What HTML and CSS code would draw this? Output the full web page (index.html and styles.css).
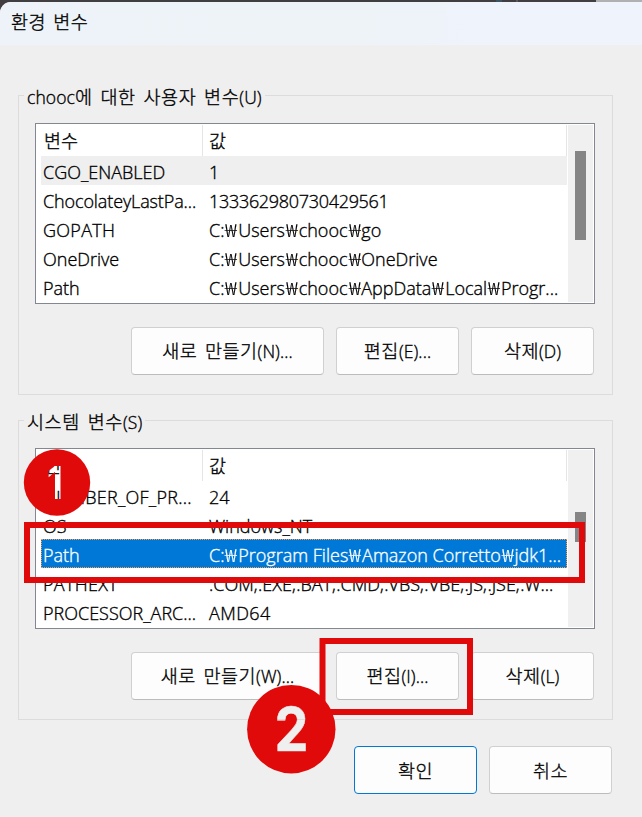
FILE: index.html
```
<!DOCTYPE html>
<html lang="ko">
<head>
<meta charset="utf-8">
<title>환경 변수</title>
<link rel="stylesheet" href="styles.css">
</head>
<body>
<div class="backdrop"><i class="seg teal"></i><i class="seg line"></i><i class="seg light"></i></div>
<main class="dialog">
  <header class="titlebar">환경 변수</header>
  <section class="group">
    <h2 class="legend"><span class="en">chooc</span>에 대한 사용자 변수<span class="en">(U)</span></h2>
    <div class="list">
      <div class="table">
        <div class="head"><span class="name">변수</span><span class="value">값</span></div>
        <div class="row muted"><span class="name">CGO_ENABLED</span><span class="value">1</span></div>
        <div class="row"><span class="name n-choco">ChocolateyLastPa...</span><span class="value v-num">133362980730429561</span></div>
        <div class="row"><span class="name n-gopath">GOPATH</span><span class="value">C:<b>₩</b>Users<b>₩</b>chooc<b>₩</b>go</span></div>
        <div class="row"><span class="name">OneDrive</span><span class="value">C:<b>₩</b>Users<b>₩</b>chooc<b>₩</b>OneDrive</span></div>
        <div class="row"><span class="name">Path</span><span class="value">C:<b>₩</b>Users<b>₩</b>chooc<b>₩</b>AppData<b>₩</b>Local<b>₩</b>Progr...</span></div>
      </div>
      <div class="scroll"><div class="thumb user-thumb"></div></div>
    </div>
    <div class="actions">
      <button class="wide">새로 만들기<span class="en">(N)...</span></button>
      <button>편집<span class="en">(E)...</span></button>
      <button>삭제<span class="en">(D)</span></button>
    </div>
  </section>
  <section class="group">
    <h2 class="legend">시스템 변수<span class="en">(S)</span></h2>
    <div class="list">
      <div class="table">
        <div class="head"><span class="name">변수</span><span class="value">값</span></div>
        <div class="row"><span class="name n-number">NUMBER_OF_PR...</span><span class="value">24</span></div>
        <div class="row"><span class="name">OS</span><span class="value">Windows_NT</span></div>
        <div class="row selected"><span class="name">Path</span><span class="value">C:<b>₩</b>Program Files<b>₩</b>Amazon Corretto<b>₩</b>jdk1...</span></div>
        <div class="row"><span class="name n-gopath">PATHEXT</span><span class="value">.COM;.EXE;.BAT;.CMD;.VBS;.VBE;.JS;.JSE;.W...</span></div>
        <div class="row"><span class="name">PROCESSOR_ARC...</span><span class="value v-nt">AMD64</span></div>
      </div>
      <div class="scroll"><div class="thumb system-thumb"></div></div>
    </div>
    <div class="actions">
      <button class="wide">새로 만들기<span class="en">(W)...</span></button>
      <button>편집<span class="en">(I)...</span></button>
      <button>삭제<span class="en">(L)</span></button>
    </div>
  </section>
  <footer class="confirm">
    <button class="primary">확인</button>
    <button>취소</button>
  </footer>
</main>
<svg class="marks" width="642" height="817" viewBox="0 0 642 817">
  <defs>
    <mask id="cut" maskUnits="userSpaceOnUse" x="0" y="0" width="642" height="817">
      <rect width="642" height="817" fill="#fff"/>
      <text class="digit one" transform="translate(47 499) scale(.82 1)">1</text>
      <text class="digit two" transform="translate(274.500 751) scale(.9 1)">2</text>
    </mask>
  </defs>
  <g fill="none" stroke="#e10a0a" stroke-width="6">
    <rect x="27" y="525" width="555" height="55"/>
    <rect x="322.5" y="641" width="147.500" height="71"/>
  </g>
  <g fill="#e10a0a" mask="url(#cut)">
    <circle cx="57" cy="482.500" r="33.200"/>
    <circle cx="291.300" cy="729.200" r="44.200"/>
  </g>
</svg>
</body>
</html>
```
FILE: styles.css
```
* { box-sizing: border-box; }
body {
  margin: 0;
  width: 642px;
  height: 817px;
  overflow: hidden;
  position: relative;
  background: #403e40;
  color: #000;
  font: 300 18px/29px "Open Sans", "Noto Sans CJK KR", sans-serif;
  -webkit-text-stroke: .35px currentColor;
}
.backdrop { height: 2px; display: flex; background: #403e40; }
.seg { height: 2px; flex: none; }
.teal { width: 6px; margin-left: 496px; background: #3a5560; }
.line { width: 2px; margin-left: 14px; background: #5b595b; }
.light { width: 46px; margin-left: 78px; background: #b1b0b2; }
.dialog {
  height: 815px;
  background: #efefef;
  border-top-left-radius: 11px;
  overflow: hidden;
}
.titlebar {
  height: 43px;
  padding: 5px 11px;
  background: linear-gradient(100deg, #edf3f8 0%, #edf3f7 55%, #eff3fc 75%);
  font-family: "Noto Sans CJK KR", sans-serif;
  font-size: 18.5px;
  font-weight: 300;
  letter-spacing: .5px;
  word-spacing: 1.5px;
}
.group {
  width: 595px;
  height: 300px;
  margin: 50px 0 0 18px;
  padding: 0 17px;
  border: 1px solid #dcdcdc;
}
.group + .group { margin-top: 25px; }
.legend {
  width: fit-content;
  height: 28px;
  margin: -14px 0 13px -12px;
  padding: 0 3px;
  background: #efefef;
  font: 300 18.5px/28px "Noto Sans CJK KR", sans-serif;
  letter-spacing: .6px;
  word-spacing: 2px;
  white-space: nowrap;
}
.en { font-family: "Open Sans", sans-serif; font-size: 17.5px; letter-spacing: .1px; }
.list {
  width: 560px;
  height: 181px;
  margin-left: -1px;
  padding: 1px 1px 1px 5px;
  display: flex;
  justify-content: space-between;
  border: 1px solid #828790;
  background: #fff;
}
.table { width: 526px; }
.head, .row { display: grid; grid-template-columns: 162px 364px; }
.head {
  height: 31px;
  line-height: 31px;
  font-family: "Noto Sans CJK KR", sans-serif;
  font-size: 18.5px;
}
.head span { border-right: 1px solid #e5e5e5; }
.head .name { padding-left: 3px; }
.row { height: 29px; line-height: 32px; }
.name { padding-left: 2px; white-space: nowrap; }
.value { padding-left: 6px; white-space: nowrap; }
b {
  display: inline-block;
  width: 13.8px;
  font: 300 18px/16px "Noto Sans CJK KR", sans-serif;
  text-align: center;
  transform: scaleX(1.22);
  -webkit-text-stroke: .1px currentColor;
}
.n-choco { letter-spacing: -.12px; }
.v-num { letter-spacing: -.3px; }
.n-gopath { letter-spacing: .3px; }
.n-number { letter-spacing: .25px; }
.v-nt { letter-spacing: .4px; }
.muted { background: #efefef; }
.selected { background: #0078d7; color: #fff; outline: 1px dotted #ff9a3c; outline-offset: -1px; }
.scroll { width: 25px; background: #f0f0f0; }
.thumb { width: 11px; margin-left: 7px; background: #858585; }
.user-thumb { height: 89px; margin-top: 26px; }
.system-thumb { height: 30px; margin-top: 62px; }
.actions {
  display: flex;
  justify-content: flex-end;
  gap: 12px;
  margin: 23px 1px 0 0;
}
button {
  width: 123px;
  height: 48px;
  padding: 0;
  border: 1px solid #d0d0d0;
  border-bottom-color: #bcbcbc;
  border-radius: 4px;
  background: #fdfdfd;
  color: #000;
  font: 300 18.5px/29px "Noto Sans CJK KR", sans-serif;
  letter-spacing: .5px;
  word-spacing: 2px;
  white-space: nowrap;
}
.wide { width: 193px; }
.confirm {
  display: flex;
  justify-content: flex-end;
  gap: 12px;
  margin: 26px 30px 0 0;
}
.primary { border-color: #0078d4; }
.marks { position: absolute; left: 0; top: 0; }
.digit { fill: #000; font-family: Inter, sans-serif; font-weight: 700; -webkit-text-stroke: 0; }
.one { font-size: 45px; }
.two { font-size: 60px; stroke: #000; stroke-width: .6px; }
```
